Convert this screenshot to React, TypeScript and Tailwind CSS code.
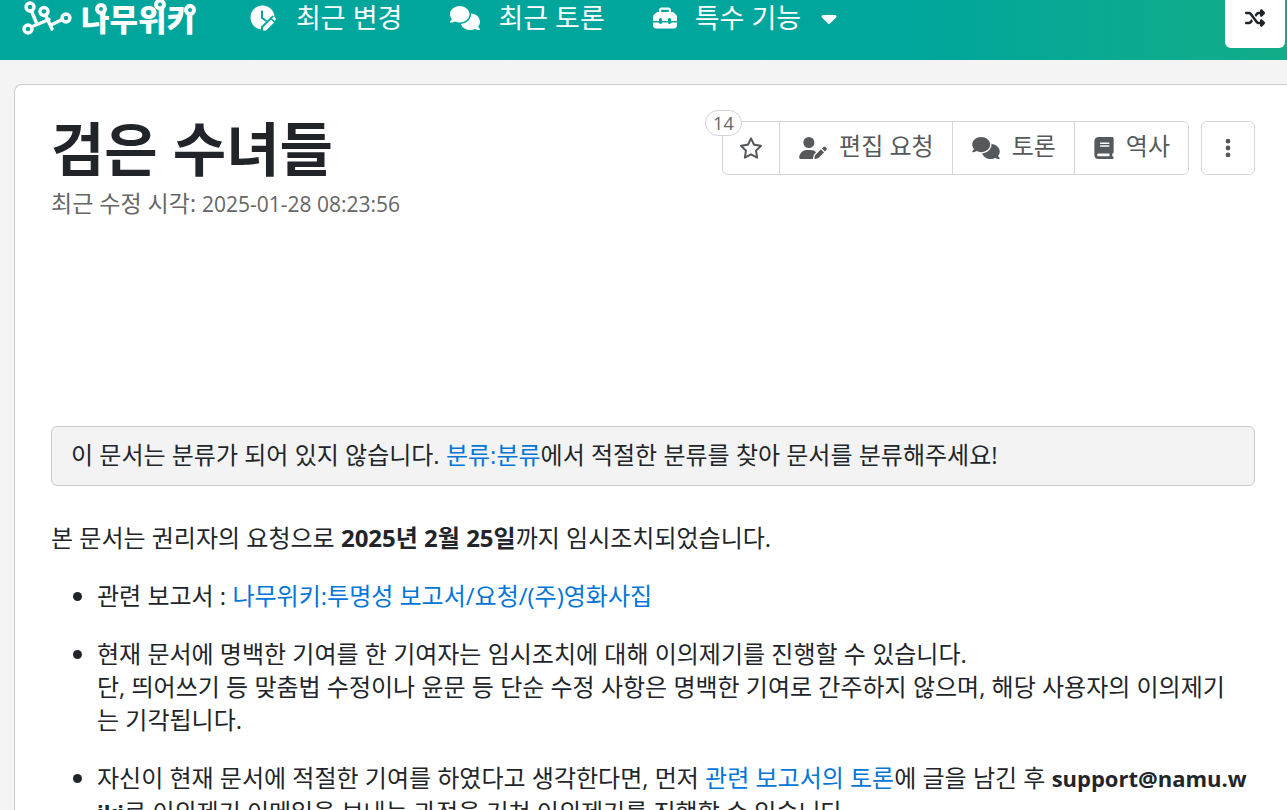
import type { ReactNode } from "react";
import {
  FaBook,
  FaCaretDown,
  FaComments,
  FaEllipsisVertical,
  FaRegStar,
  FaShuffle,
  FaToolbox,
  FaUserPen,
} from "react-icons/fa6";

const STAR_COUNT = 14;

function Logo() {
  return (
    <svg width="180" height="40" viewBox="0 0 180 40" role="img" aria-label="나무위키">
      <g fill="none" stroke="#fff" strokeWidth="3.4" strokeLinecap="round">
        <path d="M9.500 13 14.500 25M23.500 17 30 31M11.500 28 27 21.500M30 26.500 40 21.500" />
        <circle cx="8" cy="9" r="4" />
        <circle cx="22" cy="13.500" r="4" />
        <circle cx="6" cy="31" r="4" />
        <circle cx="44" cy="20" r="4" />
      </g>
      <text
        x="59"
        y="33"
        fill="#fff"
        fontSize="31"
        fontWeight="900"
        fontFamily="'Noto Sans CJK KR', sans-serif"
      >
        나무위키
      </text>
      <g fill="#00a69c" stroke="#fff" strokeWidth="4">
        <circle cx="79" cy="11" r="4" />
        <circle cx="138" cy="6.500" r="4" />
        <circle cx="168" cy="12" r="4" />
      </g>
    </svg>
  );
}

function ClockPenIcon() {
  return (
    <svg width="28" height="26" viewBox="0 0 28 26" aria-hidden="true">
      <circle cx="12.500" cy="12.500" r="12" fill="#fff" />
      <path d="M12 5.500V13l4.500 3" fill="none" stroke="#00a69c" strokeWidth="2" />
      <path d="M11 27v-5.500L22.500 10.500l5 4.500L16 27z" fill="#00a69c" />
      <path d="M13 25.500v-3l8-8 3 3-8 8zM22 13.500l1.200-1.200q.8-.6 1.500 0l1 1q.6.800 0 1.500L24.800 16z" fill="#fff" />
    </svg>
  );
}

function NavLink({ icon, children }: { icon: ReactNode; children: ReactNode }) {
  return (
    <a href="#" className="flex items-center gap-[18px] whitespace-nowrap">
      {icon}
      <span>{children}</span>
    </a>
  );
}

function ToolButton({ icon, label }: { icon: ReactNode; label: string }) {
  return (
    <button
      type="button"
      className="flex items-center gap-3 border-l border-[#d5d7d9] pr-[18px] pl-[19px] whitespace-nowrap"
    >
      {icon}
      <span className="pb-1">{label}</span>
    </button>
  );
}

function DocLink({ children }: { children: ReactNode }) {
  return (
    <a href="#" className="text-[#0275d8] hover:underline">
      {children}
    </a>
  );
}

export default function App() {
  return (
    <div className="h-screen overflow-hidden bg-[#f4f4f4] font-['Open_Sans','Noto_Sans_CJK_KR',sans-serif] text-2xl text-[#212529]">
      <header className="flex h-[60px] items-start justify-between bg-linear-to-r from-[#00a69c] from-70% to-[#12ac88] pr-0.5 pl-[22px] text-white">
        <div className="flex h-9 items-center">
          <a href="#" className="mr-12 h-10">
            <Logo />
          </a>
          <nav className="flex items-center gap-12 text-[27px] leading-9">
            <NavLink icon={<ClockPenIcon />}>최근 변경</NavLink>
            <NavLink icon={<FaComments className="h-6 w-[30px]" />}>최근 토론</NavLink>
            <button type="button" className="flex items-center gap-[18px] whitespace-nowrap">
              <FaToolbox className="size-6" />
              <span>특수 기능</span>
              <FaCaretDown className="-ml-0.5 size-6" />
            </button>
          </nav>
        </div>
        <button
          type="button"
          aria-label="랜덤 문서"
          className="flex h-12 w-[60px] justify-center rounded-b-md bg-white pt-2 text-[#212529]"
        >
          <FaShuffle className="size-5" />
        </button>
      </header>

      <main className="mt-6 ml-3.5 h-full rounded-tl-lg border-t border-l border-[#ccc] bg-white pt-9 pr-8 pl-9">
        <div className="flex items-start justify-between">
          <div>
            <h1 className="text-[58px] leading-[56px] font-bold whitespace-nowrap">검은 수녀들</h1>
            <p className="mt-2 text-[23px] leading-9 text-[#666]">
              최근 수정 시각: <time className="text-[21px]">2025-01-28 08:23:56</time>
            </p>
          </div>
          <div className="flex h-[54px] gap-3 text-[#55595c]">
            <div className="relative flex rounded-md border border-[#d5d7d9]">
              <button type="button" aria-label="즐겨찾기" className="flex w-14 items-center justify-center">
                <FaRegStar className="size-6" />
              </button>
              <span className="absolute -top-3 -left-[18px] rounded-full border border-[#ced4da] bg-white px-[7px] text-lg leading-6 text-[#666]">
                {STAR_COUNT}
              </span>
              <ToolButton icon={<FaUserPen className="h-[22px] w-7" />} label="편집 요청" />
              <ToolButton icon={<FaComments className="h-[22px] w-7" />} label="토론" />
              <ToolButton icon={<FaBook className="h-[22px] w-5" />} label="역사" />
            </div>
            <button
              type="button"
              aria-label="더보기"
              className="flex w-[54px] items-center justify-center rounded-md border border-[#d5d7d9]"
            >
              <FaEllipsisVertical className="size-[22px]" />
            </button>
          </div>
        </div>

        <div className="mt-[204px] rounded-md border border-[#ccc] bg-[#f3f3f3] px-[19px] pt-[11px] pb-[14px] leading-[33px]">
          이 문서는 분류가 되어 있지 않습니다. <DocLink>분류:분류</DocLink>에서 적절한 분류를 찾아 문서를
          분류해주세요!
        </div>

        <article className="mt-[35px] leading-[33px] break-all">
          <p>
            본 문서는 권리자의 요청으로 <strong>2025년 2월 25일</strong>까지 임시조치되었습니다.
          </p>
          <ul className="mt-[25px] list-disc space-y-[25px] pl-[46px]">
            <li>
              관련 보고서 : <DocLink>나무위키:투명성 보고서/요청/(주)영화사집</DocLink>
            </li>
            <li>
              현재 문서에 명백한 기여를 한 기여자는 임시조치에 대해 이의제기를 진행할 수 있습니다.
              <br />
              단, 띄어쓰기 등 맞춤법 수정이나 윤문 등 단순 수정 사항은 명백한 기여로 간주하지 않으며, 해당 사용자의
              이의제기
              <br />
              는 기각됩니다.
            </li>
            <li>
              자신이 현재 문서에 적절한 기여를 하였다고 생각한다면, 먼저 <DocLink>관련 보고서의 토론</DocLink>에 글을
              남긴 후{" "}
              <strong className="text-[22px]">
                support@namu.w
                <br />
                iki
              </strong>
              로 이의제기 이메일을 보내는 과정을 거쳐 이의제기를 진행할 수 있습니다.
            </li>
          </ul>
        </article>
      </main>
    </div>
  );
}
